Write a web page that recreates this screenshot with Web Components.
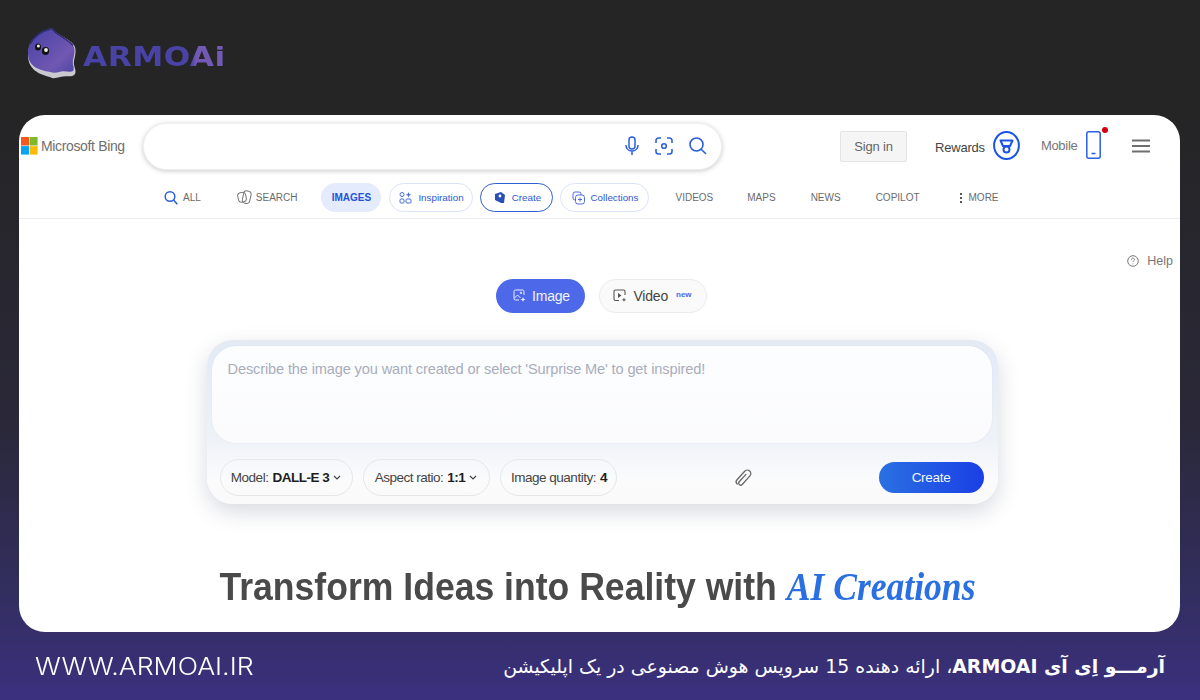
<!DOCTYPE html>
<html lang="en"><head><meta charset="utf-8"><title>ArmoAI</title>
<style>
html,body{margin:0;height:100%}
body{width:1200px;height:700px;overflow:hidden;font-family:"Liberation Sans",Arial,sans-serif;background:linear-gradient(180deg,#252526 0,#252526 16%,#2a2838 60%,#322e60 85%,#3b307f 100%)}
</style></head><body>
<armo-page></armo-page>
<template id="t-page"><style>
:host{display:flex;flex-direction:column;width:1200px;height:700px}
.card{margin:0 20px 0 19px;height:517px;background:#fff;border-radius:26px;display:flex;flex-direction:column;overflow:hidden}
.body{flex:1;display:flex;flex-direction:column;align-items:center}
h1{margin:60px 0 0 -5px;font:700 39px/46px "Liberation Sans",Arial,sans-serif;color:#4a4a4a;white-space:nowrap;transform:scaleX(.912)}
h1 em{font:italic 700 39px/46px "Liberation Serif","Times New Roman",serif;color:#2a70e2}
</style>
<armo-brand></armo-brand>
<div class="card">
<bing-header></bing-header>
<bing-nav></bing-nav>
<div class="body">
<help-link></help-link>
<mode-tabs></mode-tabs>
<prompt-panel></prompt-panel>
<h1>Transform Ideas into Reality with <em>AI Creations</em></h1>
</div>
</div>
<armo-footer></armo-footer>
</template>

<template id="t-brand"><style>
:host{display:flex;align-items:flex-start;height:115px;box-sizing:border-box;padding:27px 0 0 27px}
svg{display:block;flex:none}
.t{margin:15px 0 0 6px;font:700 26px/30px "DejaVu Sans",sans-serif;letter-spacing:.4px;background:linear-gradient(90deg,#4a43a6 0,#4a43a6 76%,#7159b4 79%,#7159b4 100%);-webkit-background-clip:text;background-clip:text;color:transparent;transform-origin:left center;transform:scaleX(1.2)}
</style>
<svg width="50" height="53" viewBox="0 0 50 53">
<path d="M1 28C1 14 12 4 25 1c4 7 15 9 22 17 3 5 1 11 0 16-1 5 3 9 1 13-3 4-9 1-15 3-4 1-7 2-10 0C11 47 1 42 1 28z" fill="#c9c9cf"/>
<path d="M1 26C1 12 12 4 25 1c4 7 15 9 21 17 3 5 1 10 0 15-1 5 2 8 0 11-3 2-9-1-14 1-3 1-6 1-9 0C11 43 1 39 1 26z" fill="url(#g)"/>
<path d="M3 17C7 9 15 4 25 1.500c4 7 14 9 21 17" fill="none" stroke="#2b2a70" stroke-width="1.300"/>
<ellipse cx="11" cy="20" rx="3" ry="3.500" fill="#111"/><ellipse cx="11.400" cy="19" rx="1.500" ry="1.600" fill="#eee"/>
<ellipse cx="18.500" cy="24" rx="3.600" ry="4.100" fill="#111"/><ellipse cx="19" cy="23" rx="1.900" ry="2" fill="#eee"/>
<defs><linearGradient id="g" x1="0" y1="0" x2="1" y2="1"><stop offset="0" stop-color="#4640a4"/><stop offset=".7" stop-color="#7058b2"/><stop offset="1" stop-color="#4d45a6"/></linearGradient></defs>
</svg><span class="t">ARMOAi</span>
</template>

<template id="t-header"><style>
:host{display:flex;align-items:center;height:62px;padding:0 30px 0 2px;font-family:"Liberation Sans",Arial,sans-serif}
.ms{display:flex;align-items:center;width:122px;font-size:14px;color:#6f6f6f;letter-spacing:-.35px;white-space:nowrap;gap:3px}
.ms svg{flex:none}
.search{width:579px;height:47px;box-sizing:border-box;border-radius:24px;background:#fff;border:1px solid #f0f0f0;box-shadow:0 1px 5px rgba(0,0,0,.22);display:flex;align-items:center;justify-content:flex-end;gap:15px;padding-right:14px}
.search svg{display:block;stroke:#2a5fe0;fill:none}
.sign{margin-left:118px;width:67px;height:31px;box-sizing:border-box;background:#f5f5f5;border:1px solid #e4e4e4;border-radius:2px;font-size:13px;letter-spacing:-.2px;color:#666;display:flex;align-items:center;justify-content:center}
.rew{margin-left:28px;font-size:13px;letter-spacing:-.2px;color:#444;display:flex;align-items:center;gap:8px;margin-top:-1px}
.rew span{padding-top:3px}
.mob{margin-left:21px;font-size:13px;letter-spacing:-.3px;color:#767676;display:flex;align-items:center;gap:9px;position:relative;margin-top:-2px}
.dot{position:absolute;right:-7px;top:-4px;width:6px;height:6px;border-radius:50%;background:#d40010}
.ham{margin-left:auto;display:block}
</style>
<div class="ms"><svg width="17" height="18" viewBox="0 0 17 18"><rect width="8" height="8.500" fill="#f25a1f"/><rect x="8.600" width="8" height="8.500" fill="#7fba2c"/><rect y="9.100" width="8" height="8.500" fill="#05a6f0"/><rect x="8.600" y="9.100" width="8" height="8.500" fill="#ffba08"/></svg><span>Microsoft Bing</span></div>
<div class="search">
<svg width="16" height="20" viewBox="0 0 16 20" stroke-width="1.500"><rect x="5" y="1" width="6" height="12" rx="3"/><path d="M2 9c0 3.500 2.500 6 6 6s6-2.500 6-6M8 15v4"/></svg>
<svg width="18" height="18" viewBox="0 0 18 18" stroke-width="1.600"><path d="M1 6V3.500A2.500 2.500 0 0 1 3.500 1H6M12 1h2.500A2.500 2.500 0 0 1 17 3.500V6M17 12v2.500a2.500 2.500 0 0 1-2.500 2.500H12M6 17H3.500A2.500 2.500 0 0 1 1 14.500V12"/><circle cx="9" cy="9" r="2.300"/></svg>
<svg width="18" height="18" viewBox="0 0 18 18" stroke-width="1.600" style="margin-left:1px"><circle cx="7.500" cy="7.500" r="6.500"/><path d="M12.200 12.200L17 17"/></svg>
</div>
<div class="sign">Sign in</div>
<div class="rew"><span>Rewards</span><svg width="27" height="29" viewBox="0 0 27 29" fill="none" stroke="#1b55e6" stroke-width="2"><ellipse cx="13.500" cy="14.500" rx="12.400" ry="13.400"/><path d="M7.500 9.500h12l-2.500 5.500h-7z" stroke-linejoin="round"/><circle cx="13.500" cy="18.500" r="3"/></svg></div>
<div class="mob"><span>Mobile</span><svg width="15" height="28" viewBox="0 0 15 28" fill="none" stroke="#2a5fe0" stroke-width="1.500"><rect x=".8" y=".8" width="13.400" height="26.400" rx="2"/><path d="M5.500 22.500h4"/></svg><i class="dot"></i></div>
<svg class="ham" width="18" height="14" viewBox="0 0 18 14" stroke="#6e6e6e" stroke-width="1.800"><path d="M0 1.500h18M0 7h18M0 12.500h18"/></svg>
</template>

<template id="t-nav"><style>
:host{display:flex;align-items:center;height:42px;box-sizing:border-box;border-bottom:1px solid #ececec;font:10px "Liberation Sans",Arial,sans-serif;color:#6b6b6b;white-space:nowrap}
.it{display:flex;align-items:center}
svg{display:block;flex:none}
.img{width:60px;height:29px;border-radius:15px;background:#e4ebfc;color:#2254d8;font-weight:700;display:flex;align-items:center;justify-content:center;margin-left:24px}
.p{height:29px;box-sizing:border-box;border:1px solid #dbe3fb;border-radius:15px;display:flex;align-items:center;justify-content:center;gap:6px;color:#2f57d2;font-size:9.800px}
.c{border:1.300px solid #2f5fd4}
</style>
<span class="it" style="margin-left:145px"><svg width="14" height="15" viewBox="0 0 14 15" fill="none" stroke="#2a5fe0" stroke-width="1.500"><circle cx="6" cy="6.500" r="4.800"/><path d="M9.500 10l3.800 4.300"/></svg><span style="margin-left:5px">ALL</span></span>
<span class="it" style="margin-left:36px"><svg width="15" height="15" viewBox="0 0 15 15" fill="none" stroke="#777" stroke-width="1"><rect x="1" y="2.500" width="8" height="9.500" rx="3" transform="rotate(-12 5 7)"/><rect x="6" y="1" width="7.500" height="12.500" rx="3" transform="rotate(12 10 7)"/></svg><span style="margin-left:4px">SEARCH</span></span>
<span class="img">IMAGES</span>
<span class="p" style="width:84px;margin-left:8px"><svg width="13" height="13" viewBox="0 0 13 13" fill="none" stroke="#4b6edb" stroke-width="1"><circle cx="3" cy="3.500" r="2"/><rect x="1" y="8" width="4" height="4" rx="1"/><rect x="7" y="8" width="5" height="4" rx="1"/><path d="M9.500 1l.8 2 2 .8-2 .8-.8 2-.8-2-2-.8 2-.8z" fill="#4b6edb" stroke="none"/></svg>Inspiration</span>
<span class="p c" style="width:73px;margin-left:7px"><svg width="13" height="13" viewBox="0 0 13 13"><path d="M2 3l6-2 4 3-1 8-3 0-6-3z" fill="#2a50b8"/><circle cx="7" cy="5" r="1.400" fill="#fff"/></svg>Create</span>
<span class="p" style="width:89px;margin-left:7px"><svg width="13" height="14" viewBox="0 0 13 14" fill="none" stroke="#4b6edb" stroke-width="1"><rect x="1" y="1" width="8" height="8" rx="2"/><rect x="3.500" y="4" width="9" height="9" rx="2.500" fill="#fff"/><path d="M8 6.500v4M6 8.500h4"/></svg>Collections</span>
<span class="it" style="margin-left:26px">VIDEOS</span>
<span class="it" style="margin-left:34px">MAPS</span>
<span class="it" style="margin-left:35px">NEWS</span>
<span class="it" style="margin-left:35px">COPILOT</span>
<span class="it" style="margin-left:39px"><svg width="4" height="12" viewBox="0 0 4 12" fill="#555"><rect x="1" y="1" width="2" height="2"/><rect x="1" y="5" width="2" height="2"/><rect x="1" y="9" width="2" height="2"/></svg><span style="margin-left:6px">MORE</span></span>
</template>

<template id="t-help"><style>
:host{display:flex;align-self:flex-end;align-items:center;gap:8px;margin:34px 7px 0 0;height:16px;font:12.500px/16px "Liberation Sans",Arial,sans-serif;color:#777}
svg{display:block}
</style><svg width="12" height="12" viewBox="0 0 12 12" fill="none" stroke="#777" stroke-width="1"><circle cx="6" cy="6" r="5.300"/><path d="M4.500 4.700c0-2 3-2 3-.2 0 1.200-1.500 1.200-1.500 2.500"/><circle cx="6" cy="8.800" r=".5" fill="#777" stroke="none"/></svg><span>Help</span>
</template>

<template id="t-tabs"><style>
:host{display:flex;gap:14px;margin:10px 0 0 4px;font:14px "Liberation Sans",Arial,sans-serif;letter-spacing:-.2px}
.t{height:34px;box-sizing:border-box;border-radius:17px;display:flex;align-items:center;justify-content:center;gap:6px}
.a{width:89px;background:#4d68e8;color:#f2f4ff;padding-left:2px}
.b{width:108px;background:#fafafa;border:1px solid #ececec;color:#444;padding-right:1px}
sup{font:700 8px/1 "Liberation Sans",Arial,sans-serif;color:#4d68e8;margin:-3px 0 0 2px;letter-spacing:0}
svg{display:block}
</style>
<div class="t a"><svg width="13" height="14" viewBox="0 0 13 14" fill="none" stroke="#eef" stroke-width="1"><path d="M6 11H2.500A1.500 1.500 0 0 1 1 9.500v-7A1.500 1.500 0 0 1 2.500 1h7A1.500 1.500 0 0 1 11 2.500V6"/><path d="M1.500 9l3-3 3 3"/><circle cx="8" cy="3.800" r=".8"/><path d="M10 8l.7 1.800 1.800.7-1.800.7-.7 1.800-.7-1.800-1.800-.7 1.800-.7z" fill="#eef" stroke="none"/></svg>Image</div>
<div class="t b"><svg width="14" height="14" viewBox="0 0 14 14" fill="none" stroke="#555" stroke-width="1.100"><path d="M6 11.500H2.500A1.500 1.500 0 0 1 1 10V2.500A1.500 1.500 0 0 1 2.500 1h8A1.500 1.500 0 0 1 12 2.500V6"/><path d="M5 4l3.500 2.500L5 9z" fill="#555" stroke="none"/><path d="M11 8.500l.6 1.700 1.700.6-1.700.6-.6 1.700-.6-1.700-1.700-.6 1.700-.6z" fill="#555" stroke="none"/></svg>Video<sup>new</sup></div>
</template>

<template id="t-panel"><style>
:host{display:block;width:791px;height:164px;box-sizing:border-box;margin:27px 0 0 5px;padding:6px 6px 0 5px;border-radius:26px;background:linear-gradient(180deg,#e3eaf4 0,#eef2f8 60%,#fbfbfc 85%,#fafafa 100%);box-shadow:0 8px 22px rgba(60,70,100,.2)}
.ta{height:97px;box-sizing:border-box;border-radius:24px;background:linear-gradient(180deg,#fcfdff,#fbfbfe);padding:14px 16px;font:14.600px/18px "Liberation Sans",Arial,sans-serif;color:#a9adbb;letter-spacing:-.14px;white-space:nowrap;box-shadow:0 0 1px rgba(120,130,170,.3)}
.row{display:flex;align-items:center;height:37px;margin:16px 0 0 8px}
.chip{height:37px;box-sizing:border-box;border:1px solid #e7e7ea;border-radius:19px;display:flex;align-items:center;justify-content:center;gap:3px;font:13.500px "Liberation Sans",Arial,sans-serif;color:#444;letter-spacing:-.5px;white-space:nowrap}
.chip b{color:#1e1e1e;margin-left:1px}
.chip svg{margin-left:1px}
.clip{margin-left:117px;display:block}
.go{margin-left:auto;margin-right:8px;width:105px;height:31px;border-radius:16px;background:linear-gradient(90deg,#2a70e2,#1a3fe6);color:#f2f6ff;font:13.500px/31px "Liberation Sans",Arial,sans-serif;text-align:center;letter-spacing:-.3px}
</style>
<div class="ta">Describe the image you want created or select 'Surprise Me' to get inspired!</div>
<div class="row">
<div class="chip" style="width:133px">Model: <b>DALL-E 3</b><svg width="8" height="5" viewBox="0 0 8 5" fill="none" stroke="#444" stroke-width="1.200"><path d="M1 1l3 3 3-3"/></svg></div>
<div class="chip" style="width:127px;margin-left:10px">Aspect ratio: <b>1:1</b><svg width="8" height="5" viewBox="0 0 8 5" fill="none" stroke="#444" stroke-width="1.200"><path d="M1 1l3 3 3-3"/></svg></div>
<div class="chip" style="width:117px;margin-left:10px;padding-left:2px">Image quantity: <b>4</b></div>
<svg class="clip" width="20" height="22" viewBox="0 0 20 22" fill="none" stroke="#666" stroke-width="1.300" stroke-linecap="round"><g transform="rotate(42 10 11)"><path d="M9 7v10a2 2 0 0 0 4 0V5.500a3.500 3.500 0 0 0-7 0V17a3 3 0 0 0 3 3"/></g></svg>
<div class="go">Create</div>
</div>
</template>

<template id="t-footer"><style>
:host{flex:1;display:flex;align-items:center;justify-content:space-between;padding:0 35px;color:#fff}
.u{font:300 24.500px/30px Inter,"Open Sans",sans-serif;transform-origin:left;transform:scaleX(1.09)}
.f{direction:rtl;font:400 18.900px/30px "DejaVu Sans",sans-serif;white-space:nowrap}
.f b{font-weight:700}
</style>
<span class="u">WWW.ARMOAI.IR</span>
<span class="f"><b>آرمـــو اِی آی ARMOAI</b>، ارائه دهنده 15 سرویس هوش مصنوعی در یک اپلیکیشن</span>
</template>

<script>
const defs={'armo-page':'t-page','armo-brand':'t-brand','bing-header':'t-header','bing-nav':'t-nav','help-link':'t-help','mode-tabs':'t-tabs','prompt-panel':'t-panel','armo-footer':'t-footer'};
for(const [n,t] of Object.entries(defs)){
 customElements.define(n,class extends HTMLElement{constructor(){super();this.attachShadow({mode:'open'}).appendChild(document.getElementById(t).content.cloneNode(true));}});
}
</script>
</body></html>
